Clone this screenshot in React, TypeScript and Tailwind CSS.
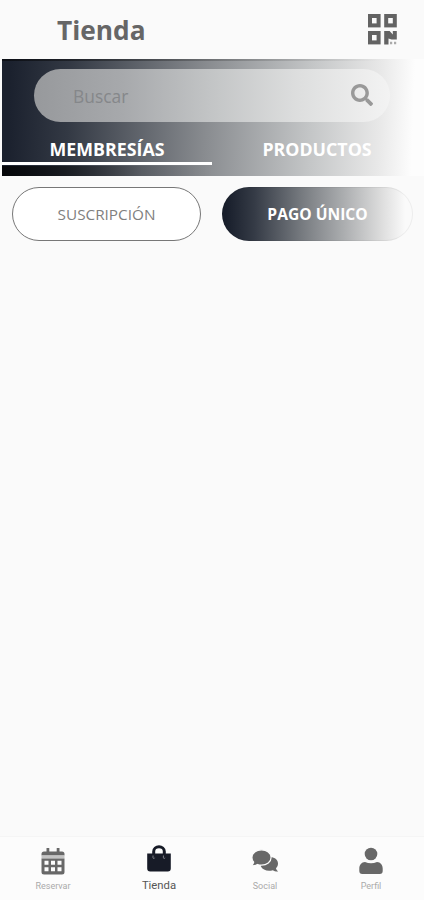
import React from "react";
import { FaSearch } from "react-icons/fa";

const QrIcon: React.FC = () => (
  <svg width="29" height="31" viewBox="0 0 29 31" fill="none">
    <g stroke="#636363" strokeWidth="4">
      <rect x="2" y="2" width="8.6" height="9.4" />
      <rect x="18.2" y="2" width="8.6" height="9.4" />
      <rect x="2" y="19" width="8.6" height="9.4" />
    </g>
    <path
      fill="#636363"
      d="M16.2 17H21.6L24.8 20.5V17H28.8V25.5H23.5L20.5 24.5V30.4H16.2Z"
    />
    <path
      fill="#aaa"
      d="M22 27.8H24.2V30.2H22ZM26 27.8H28.2V30.2H26Z"
    />
  </svg>
);

const CalendarIcon: React.FC = () => (
  <svg width="24" height="28" viewBox="0 0 24 28" fill="#686868">
    <path d="M5.5 1h2.8v3.5h7.4V1h2.8v3.5H21a2.5 2.5 0 0 1 2.5 2.5v1.5H.5V7A2.5 2.5 0 0 1 3 4.5h2.5z" />
    <path fill="#c4c4c4" d="M.5 8.5h23v3H.5z" />
    <path
      fillRule="evenodd"
      d="M.5 11.5h23V25a2.5 2.5 0 0 1-2.5 2.5H3A2.5 2.5 0 0 1 .5 25zM3.5 13.8v4h4v-4zM10 13.8v4h4v-4zM16.5 13.8v4h4v-4zM3.5 20.2v4h4v-4zM10 20.2v4h4v-4zM16.5 20.2v4h4v-4z"
    />
  </svg>
);

const BagIcon: React.FC = () => (
  <svg width="24" height="28" viewBox="0 0 24 28" fill="none">
    <path fill="#171b27" d="M.2 8.5h23.6v15a3 3 0 0 1-3 3H3.200a3 3 0 0 1-3-3z" />
    <path
      d="M6.7 11V6.500a5.300 4.700 0 0 1 10.600 0V11"
      stroke="#171b27"
      strokeWidth="3"
    />
    <path
      d="M6 10.500v2.300c0 .8 1.600.8 1.600 0M16.400 10.500v2.300c0 .8 1.600.8 1.600 0"
      stroke="#9a9da5"
      strokeWidth="0.8"
    />
  </svg>
);

const ChatIcon: React.FC = () => (
  <svg width="28" height="24" viewBox="0 0 27 24" fill="#686868">
    <path d="M12 8h7c4.500.3 7.500 3 7.500 6.500 0 2-.8 3.700-2 4.800.3 1.300 1 2 2.200 3.200-2.200.2-4-.4-5.400-1.300-5 1.400-10.300-.2-12-4z" />
    <path
      stroke="#fcfcfc"
      strokeWidth="1.2"
      d="M10 .8c5.300 0 9.600 3.300 9.600 7.700S15.300 16.200 10 16.200c-1.500 0-2.900-.2-4.100-.7-1.500 1-3.400 1.600-6 1.400C1 15.800 1.900 14.700 2.200 13.200 1 11.900.4 10.300.4 8.500.4 4.100 4.700.8 10 .8z"
    />
  </svg>
);

const UserIcon: React.FC = () => (
  <svg width="24" height="28" viewBox="0 0 24 28" fill="#686868">
    <circle cx="12" cy="7" r="6.300" />
    <path d="M6 15c4 1.700 8 1.700 12 0 3.500 0 5.700 3 5.700 6.500V24a3 3 0 0 1-3 3H3.300a3 3 0 0 1-3-3v-2.500C.3 18 2.500 15 6 15z" />
  </svg>
);

interface NavItemProps {
  label: string;
  active?: boolean;
  children: React.ReactNode;
}

const NavItem: React.FC<NavItemProps> = ({ label, active, children }) => (
  <button className="flex flex-col items-center w-[106px] pt-2">
    <span
      className={
        active
          ? "flex items-center justify-center h-8 pb-1"
          : "flex items-center justify-center h-8"
      }
    >
      {children}
    </span>
    <span
      className={
        active
          ? "mt-0.5 text-[11.3px] leading-[14px] text-[#555] font-['Roboto',sans-serif]"
          : "mt-0.5 text-[9px] leading-[14px] text-[#aaa] font-['Roboto',sans-serif]"
      }
    >
      {label}
    </span>
  </button>
);

const App: React.FC = () => {
  return (
    <div className="flex flex-col w-[424px] h-[900px] overflow-hidden bg-[#fafafa] font-['Open_Sans',sans-serif]">
      {/* Cabecera */}
      <header className="flex justify-between h-[59px] shrink-0 pl-[57px] pr-[27px]">
        <h1 className="pt-3 text-[26.3px] leading-9 font-bold text-[#666]">
          Tienda
        </h1>
        <div className="pt-[14px]">
          <QrIcon />
        </div>
      </header>

      {/* Buscador y pestañas */}
      <section className="ml-0.5 h-[117px] shrink-0 bg-[linear-gradient(92deg,#1b212e_2%,#333944_16%,#888b8f_48%,#c4c6c7_73%,#e8e8e8_89%,#fdfdfd_97%)]">
        <div className="h-0.5 bg-[linear-gradient(90deg,rgba(0,0,0,0.5)_0%,rgba(0,0,0,0.2)_50%,rgba(0,0,0,0)_90%)]" />
        <div className="flex items-center justify-between mt-2 ml-8 w-[356px] h-[53px] rounded-full pl-[39px] pr-[17px] bg-[linear-gradient(90deg,#97999c_0%,#a7a9ac_25%,#c3c5c6_50%,#dedfdf_75%,#f3f3f3_100%)]">
          <span className="pt-0.5 text-[17.4px] text-[#85878a]">Buscar</span>
          <FaSearch size={22} className="mb-0.5 text-[#999]" />
        </div>
        <div className="flex h-[44px] text-[17.8px] leading-6 font-bold text-white">
          <div className="w-[210px] h-[43px] pt-[15px] border-b-[3px] border-white text-center">
            MEMBRESÍAS
          </div>
          <div className="w-[210px] pt-[15px] text-center">PRODUCTOS</div>
        </div>
        <div className="h-[10px] bg-[linear-gradient(90deg,rgba(0,0,0,0.8)_0%,rgba(0,0,0,0.5)_15%,rgba(0,0,0,0.1)_33%,rgba(0,0,0,0)_50%)]" />
      </section>

      {/* Tipo de compra */}
      <div className="flex gap-[21px] pt-[11px] pl-3">
        <button className="w-[189px] h-[54px] rounded-full border border-[#777] bg-white text-[15.3px] text-[#808080]">
          SUSCRIPCIÓN
        </button>
        <button className="w-[191px] h-[54px] pt-0.5 rounded-full border border-black/5 bg-origin-border text-[15.6px] font-bold text-white bg-[linear-gradient(90deg,#181e2b_2%,#353b46_17%,#777b80_42%,#acaeb0_64%,#dedede_84%,#fafafa_96%)]">
          PAGO ÚNICO
        </button>
      </div>

      {/* Navegación inferior */}
      <nav className="flex h-16 shrink-0 mt-auto border-t border-[#f5f5f5] bg-[#fcfcfc]">
        <NavItem label="Reservar">
          <CalendarIcon />
        </NavItem>
        <NavItem label="Tienda" active>
          <BagIcon />
        </NavItem>
        <NavItem label="Social">
          <ChatIcon />
        </NavItem>
        <NavItem label="Perfil">
          <UserIcon />
        </NavItem>
      </nav>
    </div>
  );
};

export default App;
